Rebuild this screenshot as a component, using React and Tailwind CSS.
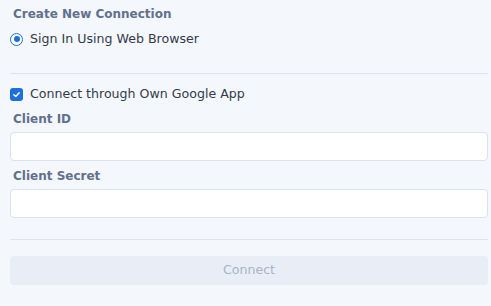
import React from 'react';

const App = () => {
    return (
        <div
            className="w-[491px] h-[306px] bg-[#f4f7fc] pl-[10px] pr-[3px] flex flex-col"
            style={{ fontFamily: '"DejaVu Sans", Verdana, sans-serif' }}
        >
            {/* Title */}
            <div className="h-[28px] flex items-center pl-[3px] text-[12px] font-bold text-[#61708d]">
                Create New Connection
            </div>

            {/* Radio */}
            <label className="h-[22px] flex items-center gap-[7px] text-[12.6px] text-[#333b4a]">
                <span className="shrink-0 w-[13px] h-[13px] rounded-full border-[1.5px] border-[#1d6fdc] bg-white flex items-center justify-center">
                    <span className="w-[6px] h-[6px] rounded-full bg-[#1d6fdc]" />
                </span>
                Sign In Using Web Browser
            </label>

            <div className="mt-[23px] h-px bg-[#dde3ee]" />

            {/* Checkbox */}
            <label className="mt-[9px] h-[22px] flex items-center gap-[7px] text-[12.6px] text-[#333b4a]">
                <span className="shrink-0 w-[13px] h-[13px] rounded-[3px] bg-[#1d6fdc] flex items-center justify-center">
                    <svg width="9" height="9" viewBox="0 0 10 10" fill="none">
                        <path d="M2 5.2 L4.2 7.2 L8 3" stroke="white" strokeWidth="1.6" strokeLinecap="round" strokeLinejoin="round" />
                    </svg>
                </span>
                Connect through Own Google App
            </label>

            {/* Client ID */}
            <div className="mt-[3px] h-[22px] flex items-center pl-[3px] text-[12px] font-bold text-[#61708d]">
                Client ID
            </div>
            <input className="mt-[2px] h-[29px] w-full rounded-[4px] border border-[#d9e1ee] bg-white outline-none px-2 text-[13px]" />

            {/* Client Secret */}
            <div className="mt-[4px] h-[22px] flex items-center pl-[3px] text-[12px] font-bold text-[#61708d]">
                Client Secret
            </div>
            <input className="mt-[2px] h-[29px] w-full rounded-[4px] border border-[#d9e1ee] bg-white outline-none px-2 text-[13px]" />

            <div className="mt-[21px] h-px bg-[#dde3ee]" />

            <button className="mt-[16px] h-[29px] w-full rounded-[4px] bg-[#e9eef6] text-[12.6px] text-[#a8b3c6]">
                Connect
            </button>
        </div>
    );
};

export default App;
